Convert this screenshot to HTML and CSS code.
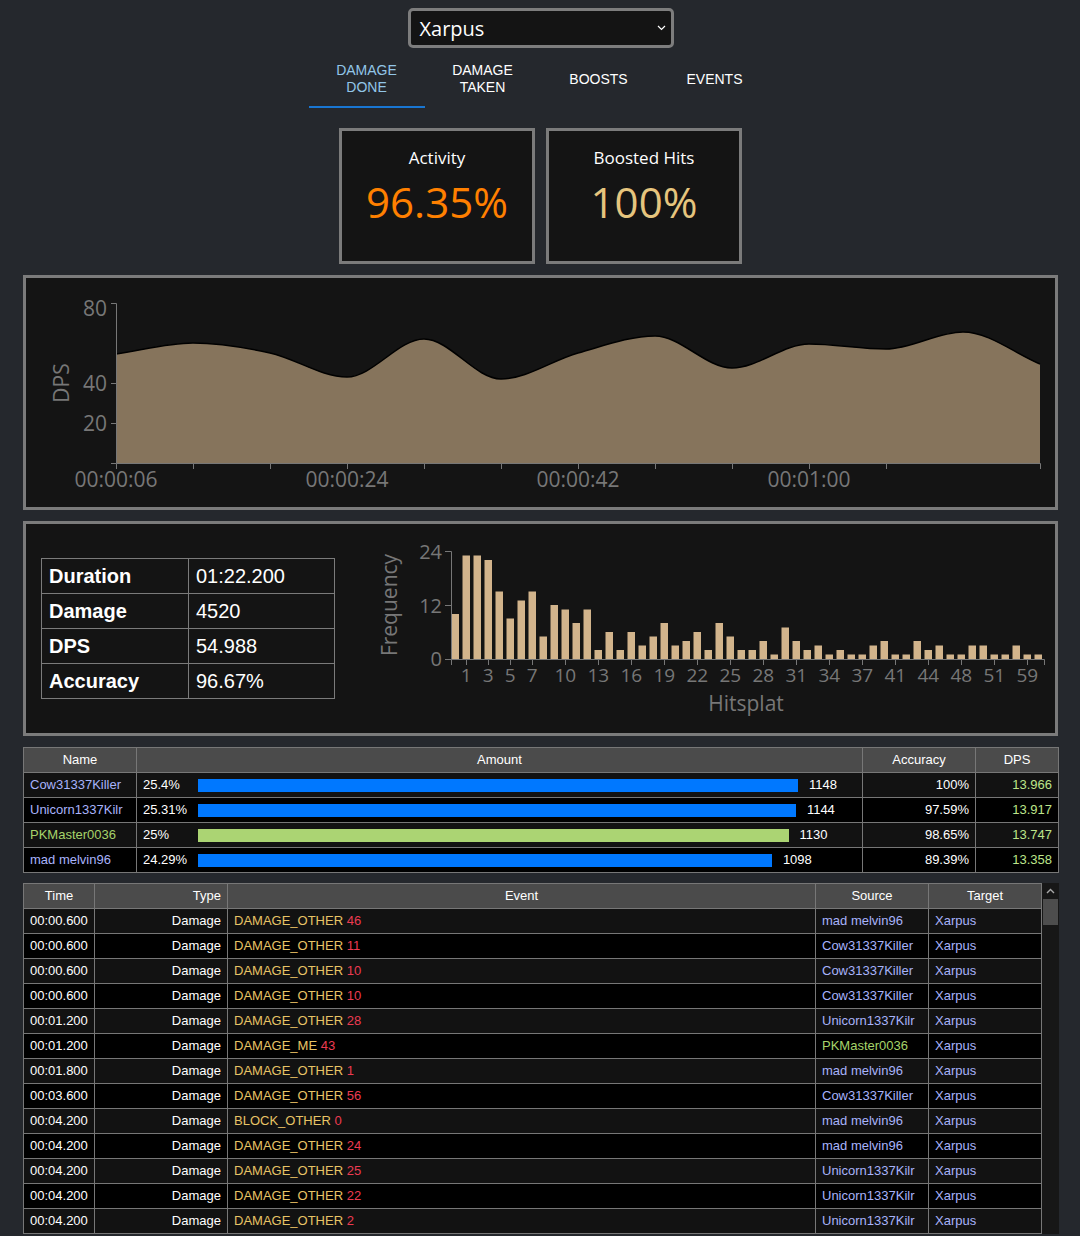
FILE: index.html
```html
<!DOCTYPE html>
<html>
<head>
<meta charset="utf-8">
<title>Xarpus</title>
<link rel="stylesheet" href="styles.css">
</head>
<body>
<div class="page">
  <div class="select-row">
    <div class="select">
      <span class="select-value">Xarpus</span>
      <svg class="chev" width="9" height="6" viewBox="0 0 9 6"><polyline points="1,1 4.5,4.5 8,1" fill="none" stroke="#fff" stroke-width="1.2"/></svg>
    </div>
  </div>

  <nav class="tabs">
    <div class="tab active">Damage<br>Done</div>
    <div class="tab">Damage<br>Taken</div>
    <div class="tab">Boosts</div>
    <div class="tab">Events</div>
  </nav>

  <div class="cards">
    <div class="card">
      <div class="card-title">Activity</div>
      <div class="card-value orange">96.35%</div>
    </div>
    <div class="card">
      <div class="card-title">Boosted Hits</div>
      <div class="card-value gold">100%</div>
    </div>
  </div>

  <div class="panel chart-panel">
    <svg class="chart" width="1029" height="229" viewBox="0 0 1029 229">
      <path d="M90,76 C115.67,72.33 141.33,65 167,65 C192.67,65 218.33,69.33 244,75 C269.67,80.67 295.33,99 321,99 C346.67,99 372.33,61 398,61 C423.67,61 449.33,101 475,101 C500.67,101 526.33,82.17 552,75 C577.67,67.83 603.33,58 629,58 C654.67,58 680.33,90 706,90 C731.67,90 757.33,66 783,66 C808.67,66 834.33,71 860,71 C885.67,71 911.33,54 937,54 C962.67,54 988.33,75.33 1014,86 L1014,185 L90,185 Z" fill="#86745c"/>
      <path d="M90,76 C115.67,72.33 141.33,65 167,65 C192.67,65 218.33,69.33 244,75 C269.67,80.67 295.33,99 321,99 C346.67,99 372.33,61 398,61 C423.67,61 449.33,101 475,101 C500.67,101 526.33,82.17 552,75 C577.67,67.83 603.33,58 629,58 C654.67,58 680.33,90 706,90 C731.67,90 757.33,66 783,66 C808.67,66 834.33,71 860,71 C885.67,71 911.33,54 937,54 C962.67,54 988.33,75.33 1014,86" fill="none" stroke="#000" stroke-width="1.5"/>
      <g class="axis" fill="none" stroke="#777" stroke-width="1">
        <path d="M85,25.5 H90.5 V185.5 H85"/>
        <path d="M85,105.5 H90.5 M85,145.5 H90.5"/>
        <path d="M90.5,191 V185.5 H1014.5 V191"/>
        <path d="M167.5,185.5 V191 M244.5,185.5 V191 M321.5,185.5 V191 M398.5,185.5 V191 M475.5,185.5 V191 M552.5,185.5 V191 M629.5,185.5 V191 M706.5,185.5 V191 M783.5,185.5 V191 M860.5,185.5 V191"/>
      </g>
      <g class="axis-text ticks-lg" text-anchor="end">
        <text x="81" y="38">80</text>
        <text x="81" y="113">40</text>
        <text x="81" y="153">20</text>
      </g>
      <g class="axis-text ticks-lg" text-anchor="middle">
        <text x="90" y="209">00:00:06</text>
        <text x="321" y="209">00:00:24</text>
        <text x="552" y="209">00:00:42</text>
        <text x="783" y="209">00:01:00</text>
      </g>
      <text class="axis-text ticks-lg" text-anchor="middle" transform="translate(43,105) rotate(-90)">DPS</text>
    </svg>
  </div>

  <div class="panel hist-panel">
    <table class="stats">
      <tr><th>Duration</th><td>01:22.200</td></tr>
      <tr><th>Damage</th><td>4520</td></tr>
      <tr><th>DPS</th><td>54.988</td></tr>
      <tr><th>Accuracy</th><td>96.67%</td></tr>
    </table>
    <svg class="hist" width="685" height="209" viewBox="0 0 685 209">
      <g fill="#d2b48c">
        <rect x="81.5" y="90" width="7.5" height="45"/>
        <rect x="92.5" y="31.5" width="7.5" height="103.5"/>
        <rect x="103.5" y="31.5" width="7.5" height="103.5"/>
        <rect x="114.5" y="36" width="7.5" height="99"/>
        <rect x="125.5" y="67.5" width="7.5" height="67.5"/>
        <rect x="136.5" y="94.5" width="7.5" height="40.5"/>
        <rect x="147.5" y="76.5" width="7.5" height="58.5"/>
        <rect x="158.5" y="67.5" width="7.5" height="67.5"/>
        <rect x="169.5" y="112.5" width="7.5" height="22.5"/>
        <rect x="180.5" y="81" width="7.5" height="54"/>
        <rect x="191.5" y="85.5" width="7.5" height="49.5"/>
        <rect x="202.5" y="99" width="7.5" height="36"/>
        <rect x="213.5" y="85.5" width="7.5" height="49.5"/>
        <rect x="224.5" y="126" width="7.5" height="9"/>
        <rect x="235.5" y="108" width="7.5" height="27"/>
        <rect x="246.5" y="126" width="7.5" height="9"/>
        <rect x="257.5" y="108" width="7.5" height="27"/>
        <rect x="268.5" y="121.5" width="7.5" height="13.5"/>
        <rect x="279.5" y="112.5" width="7.5" height="22.5"/>
        <rect x="290.5" y="99" width="7.5" height="36"/>
        <rect x="301.5" y="121.5" width="7.5" height="13.5"/>
        <rect x="312.5" y="117" width="7.5" height="18"/>
        <rect x="323.5" y="108" width="7.5" height="27"/>
        <rect x="334.5" y="126" width="7.5" height="9"/>
        <rect x="345.5" y="99" width="7.5" height="36"/>
        <rect x="356.5" y="112.5" width="7.5" height="22.5"/>
        <rect x="367.5" y="126" width="7.5" height="9"/>
        <rect x="378.5" y="126" width="7.5" height="9"/>
        <rect x="389.5" y="117" width="7.5" height="18"/>
        <rect x="400.5" y="130.5" width="7.5" height="4.5"/>
        <rect x="411.5" y="103.5" width="7.5" height="31.5"/>
        <rect x="422.5" y="117" width="7.5" height="18"/>
        <rect x="433.5" y="126" width="7.5" height="9"/>
        <rect x="444.5" y="121.5" width="7.5" height="13.5"/>
        <rect x="455.5" y="130.5" width="7.5" height="4.5"/>
        <rect x="466.5" y="126" width="7.5" height="9"/>
        <rect x="477.5" y="130.5" width="7.5" height="4.5"/>
        <rect x="488.5" y="130.5" width="7.5" height="4.5"/>
        <rect x="499.5" y="121.5" width="7.5" height="13.5"/>
        <rect x="510.5" y="117" width="7.5" height="18"/>
        <rect x="521.5" y="130.5" width="7.5" height="4.5"/>
        <rect x="532.5" y="130.5" width="7.5" height="4.5"/>
        <rect x="543.5" y="117" width="7.5" height="18"/>
        <rect x="554.5" y="126" width="7.5" height="9"/>
        <rect x="565.5" y="121.5" width="7.5" height="13.5"/>
        <rect x="576.5" y="130.5" width="7.5" height="4.5"/>
        <rect x="587.5" y="130.5" width="7.5" height="4.5"/>
        <rect x="598.5" y="121.5" width="7.5" height="13.5"/>
        <rect x="609.5" y="121.5" width="7.5" height="13.5"/>
        <rect x="620.5" y="130.5" width="7.5" height="4.5"/>
        <rect x="631.5" y="130.5" width="7.5" height="4.5"/>
        <rect x="642.5" y="121.5" width="7.5" height="13.5"/>
        <rect x="653.5" y="130.5" width="7.5" height="4.5"/>
        <rect x="664.5" y="130.5" width="7.5" height="4.5"/>
      </g>
      <g fill="none" stroke="#777" stroke-width="1">
        <path d="M75,27.5 H81.5 V135.5 H75 M75,81.5 H81.5"/>
        <path d="M81.5,141 V135.5 H674.5 V141"/>
        <path d="M96.5,135.5 V141 M118.5,135.5 V141 M140.5,135.5 V141 M162.5,135.5 V141 M195.5,135.5 V141 M228.5,135.5 V141 M261.5,135.5 V141 M294.5,135.5 V141 M327.5,135.5 V141 M360.5,135.5 V141 M393.5,135.5 V141 M426.5,135.5 V141 M459.5,135.5 V141 M492.5,135.5 V141 M525.5,135.5 V141 M558.5,135.5 V141 M591.5,135.5 V141 M624.5,135.5 V141 M657.5,135.5 V141"/>
      </g>
      <g class="axis-text ticks-md" text-anchor="end">
        <text x="72" y="35">24</text>
        <text x="72" y="89">12</text>
        <text x="72" y="142">0</text>
      </g>
      <g class="axis-text ticks-sm" text-anchor="middle">
        <text x="96.25" y="158">1</text>
        <text x="118.25" y="158">3</text>
        <text x="140.25" y="158">5</text>
        <text x="162.25" y="158">7</text>
        <text x="195.25" y="158">10</text>
        <text x="228.25" y="158">13</text>
        <text x="261.25" y="158">16</text>
        <text x="294.25" y="158">19</text>
        <text x="327.25" y="158">22</text>
        <text x="360.25" y="158">25</text>
        <text x="393.25" y="158">28</text>
        <text x="426.25" y="158">31</text>
        <text x="459.25" y="158">34</text>
        <text x="492.25" y="158">37</text>
        <text x="525.25" y="158">41</text>
        <text x="558.25" y="158">44</text>
        <text x="591.25" y="158">48</text>
        <text x="624.25" y="158">51</text>
        <text x="657.25" y="158">59</text>
      </g>
      <text class="axis-text title" text-anchor="middle" x="376" y="187">Hitsplat</text>
      <text class="axis-text title" text-anchor="middle" transform="translate(27,81) rotate(-90)">Frequency</text>
    </svg>
  </div>

  <table class="grid players">
    <colgroup><col class="c-name"><col class="c-amount"><col class="c-acc"><col class="c-dps"></colgroup>
    <thead>
      <tr><th>Name</th><th>Amount</th><th>Accuracy</th><th>DPS</th></tr>
    </thead>
    <tbody>
      <tr>
        <td class="who">Cow31337Killer</td>
        <td><div class="amt"><span class="pct">25.4%</span><span class="bar blue" style="width:600px"></span><span class="num">1148</span></div></td>
        <td class="right">100%</td>
        <td class="right dps">13.966</td>
      </tr>
      <tr>
        <td class="who">Unicorn1337Kilr</td>
        <td><div class="amt"><span class="pct">25.31%</span><span class="bar blue" style="width:597.9px"></span><span class="num">1144</span></div></td>
        <td class="right">97.59%</td>
        <td class="right dps">13.917</td>
      </tr>
      <tr>
        <td class="who me">PKMaster0036</td>
        <td><div class="amt"><span class="pct">25%</span><span class="bar green" style="width:590.6px"></span><span class="num">1130</span></div></td>
        <td class="right">98.65%</td>
        <td class="right dps">13.747</td>
      </tr>
      <tr>
        <td class="who">mad melvin96</td>
        <td><div class="amt"><span class="pct">24.29%</span><span class="bar blue" style="width:573.9px"></span><span class="num">1098</span></div></td>
        <td class="right">89.39%</td>
        <td class="right dps">13.358</td>
      </tr>
    </tbody>
  </table>

  <div class="events-wrap">
    <table class="grid events">
      <colgroup><col class="c-time"><col class="c-type"><col class="c-event"><col class="c-src"><col class="c-tgt"></colgroup>
      <thead>
        <tr><th>Time</th><th class="right">Type</th><th>Event</th><th>Source</th><th>Target</th></tr>
      </thead>
      <tbody>
        <tr><td>00:00.600</td><td class="right">Damage</td><td><span class="ev">DAMAGE_OTHER</span> <span class="evn">46</span></td><td class="who">mad melvin96</td><td class="who">Xarpus</td></tr>
        <tr><td>00:00.600</td><td class="right">Damage</td><td><span class="ev">DAMAGE_OTHER</span> <span class="evn">11</span></td><td class="who">Cow31337Killer</td><td class="who">Xarpus</td></tr>
        <tr><td>00:00.600</td><td class="right">Damage</td><td><span class="ev">DAMAGE_OTHER</span> <span class="evn">10</span></td><td class="who">Cow31337Killer</td><td class="who">Xarpus</td></tr>
        <tr><td>00:00.600</td><td class="right">Damage</td><td><span class="ev">DAMAGE_OTHER</span> <span class="evn">10</span></td><td class="who">Cow31337Killer</td><td class="who">Xarpus</td></tr>
        <tr><td>00:01.200</td><td class="right">Damage</td><td><span class="ev">DAMAGE_OTHER</span> <span class="evn">28</span></td><td class="who">Unicorn1337Kilr</td><td class="who">Xarpus</td></tr>
        <tr><td>00:01.200</td><td class="right">Damage</td><td><span class="ev">DAMAGE_ME</span> <span class="evn">43</span></td><td class="who me">PKMaster0036</td><td class="who">Xarpus</td></tr>
        <tr><td>00:01.800</td><td class="right">Damage</td><td><span class="ev">DAMAGE_OTHER</span> <span class="evn">1</span></td><td class="who">mad melvin96</td><td class="who">Xarpus</td></tr>
        <tr><td>00:03.600</td><td class="right">Damage</td><td><span class="ev">DAMAGE_OTHER</span> <span class="evn">56</span></td><td class="who">Cow31337Killer</td><td class="who">Xarpus</td></tr>
        <tr><td>00:04.200</td><td class="right">Damage</td><td><span class="ev">BLOCK_OTHER</span> <span class="evn">0</span></td><td class="who">mad melvin96</td><td class="who">Xarpus</td></tr>
        <tr><td>00:04.200</td><td class="right">Damage</td><td><span class="ev">DAMAGE_OTHER</span> <span class="evn">24</span></td><td class="who">mad melvin96</td><td class="who">Xarpus</td></tr>
        <tr><td>00:04.200</td><td class="right">Damage</td><td><span class="ev">DAMAGE_OTHER</span> <span class="evn">25</span></td><td class="who">Unicorn1337Kilr</td><td class="who">Xarpus</td></tr>
        <tr><td>00:04.200</td><td class="right">Damage</td><td><span class="ev">DAMAGE_OTHER</span> <span class="evn">22</span></td><td class="who">Unicorn1337Kilr</td><td class="who">Xarpus</td></tr>
        <tr><td>00:04.200</td><td class="right">Damage</td><td><span class="ev">DAMAGE_OTHER</span> <span class="evn">2</span></td><td class="who">Unicorn1337Kilr</td><td class="who">Xarpus</td></tr>
      </tbody>
    </table>
    <div class="scrollbar">
      <div class="sb-up">
        <svg width="9" height="6" viewBox="0 0 9 6"><polyline points="1,5 4.5,1.5 8,5" fill="none" stroke="#a8a8a8" stroke-width="1.4"/></svg>
      </div>
      <div class="sb-thumb"></div>
    </div>
  </div>
</div>
</body>
</html>
```

FILE: styles.css
```css
* {
  box-sizing: border-box;
}

html,
body {
  margin: 0;
  background: #25282d;
}

body {
  font-family: "Liberation Sans", Arial, sans-serif;
  color: #fff;
}

.page {
  padding: 8px 22px 0 23px;
}

/* select */
.select-row {
  display: flex;
  justify-content: center;
}

.select {
  width: 266px;
  height: 40px;
  border: 3px solid #7d7d7d;
  border-radius: 5px;
  background: #141414;
  display: flex;
  align-items: center;
  justify-content: space-between;
  padding: 0 5px 0 9px;
  font-family: "Open Sans", sans-serif;
  font-size: 20px;
  color: #fff;
}

.chev {
  display: block;
}

/* tabs */
.tabs {
  display: flex;
  justify-content: center;
  margin-top: 6px;
}

.tab {
  width: 116px;
  height: 54px;
  padding-bottom: 2px;
  display: flex;
  align-items: center;
  justify-content: center;
  text-align: center;
  font-size: 14px;
  line-height: 17px;
  text-transform: uppercase;
  color: #fff;
  border-bottom: 2px solid transparent;
}

.tab.active {
  color: #92c6e8;
  border-bottom-color: #1976d2;
}

/* cards */
.cards {
  display: flex;
  justify-content: center;
  gap: 11px;
  margin-top: 20px;
}

.card {
  width: 196px;
  height: 136px;
  border: 3px solid #7b7b7b;
  background: #141414;
  text-align: center;
  padding-top: 15px;
  font-family: "Open Sans", sans-serif;
}

.card-title {
  font-size: 17px;
  line-height: 24px;
  color: #fff;
}

.card-value {
  margin-top: 7px;
  font-size: 42px;
  line-height: 50px;
}

.orange {
  color: #ff8000;
}

.gold {
  color: #e6c57e;
}

/* panels */
.panel {
  border: 3px solid #7b7b7b;
  background: #141414;
  margin-top: 11px;
}

.chart-panel {
  height: 235px;
}

.chart,
.hist {
  display: block;
}

.axis-text {
  font-family: "Open Sans", sans-serif;
  fill: #777;
}

.ticks-lg {
  font-size: 21px;
}

.ticks-md {
  font-size: 20px;
}

.ticks-sm {
  font-size: 19px;
}

.title {
  font-size: 21px;
}

.hist-panel {
  height: 215px;
  display: flex;
  align-items: center;
  padding-left: 15px;
}

.hist {
  margin-left: auto;
}

/* stats table */
.stats {
  border-collapse: collapse;
  font-size: 20px;
  color: #fff;
}

.stats th,
.stats td {
  border: 1px solid #7b7b7b;
  line-height: 34px;
  padding: 0 7px;
  text-align: left;
  white-space: nowrap;
}

.stats th {
  width: 147px;
  font-weight: bold;
}

.stats td {
  width: 146px;
  font-weight: normal;
}

/* grids */
.grid {
  width: 100%;
  border-collapse: collapse;
  table-layout: fixed;
  font-size: 13px;
  color: #fff;
}

.grid th,
.grid td {
  border: 1px solid #777;
  padding: 0 6px;
  line-height: 24px;
  white-space: nowrap;
  overflow: hidden;
  text-align: left;
}

.grid th {
  background: #4b4b4b;
  font-weight: normal;
  text-align: center;
}

.grid tbody tr:nth-child(odd) td {
  background: #121212;
}

.grid tbody tr:nth-child(even) td {
  background: #000;
}

.grid .right,
.grid th.right {
  text-align: right;
}

.players {
  margin-top: 11px;
}

.c-name { width: 113px; }
.c-amount { width: 726px; }
.c-acc { width: 113px; }
.c-dps { width: 83px; }

.who {
  color: #a8b3fb;
}

.who.me {
  color: #a6d46a;
}

.dps {
  color: #bde58a;
}

.amt {
  display: flex;
  align-items: center;
}

.pct {
  width: 55px;
  flex: none;
}

.bar {
  height: 13px;
  flex: none;
}

.bar.blue {
  background: #0078ff;
}

.bar.green {
  background: #abd473;
}

.num {
  margin-left: 11px;
}

/* events */
.events-wrap {
  display: flex;
  margin-top: 10px;
}

.events {
  width: 1018px;
  flex: none;
}

.c-time { width: 71px; }
.c-type { width: 133px; }
.c-event { width: 588px; }
.c-src { width: 113px; }
.c-tgt { width: 113px; }

.ev {
  color: #e8c466;
}

.evn {
  color: #ec3b51;
}

.scrollbar {
  width: 17px;
  flex: none;
  background: #171717;
  display: flex;
  flex-direction: column;
}

.sb-up {
  height: 16px;
  display: flex;
  align-items: center;
  justify-content: center;
}

.sb-up svg {
  display: block;
}

.sb-thumb {
  height: 26px;
  margin: 0 1px;
  background: #4d4d4d;
}
```
